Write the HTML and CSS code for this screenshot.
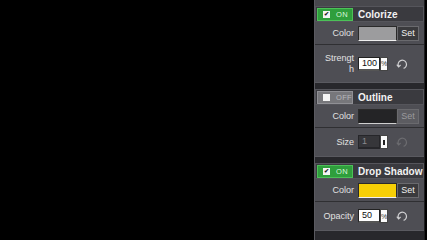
FILE: index.html
```html
<!DOCTYPE html>
<html lang="en">
<head>
  <meta charset="UTF-8">
  <meta name="viewport" content="width=device-width, initial-scale=1.0">
  <title>Effects</title>
  <link rel="stylesheet" href="styles.css">
</head>
<body>
  <div class="stage">
    <div class="panel">

      <div class="effect">
        <div class="effect-head">
          <span class="toggle on"><span class="check">&#10004;</span>ON</span>
          <span class="effect-title">Colorize</span>
        </div>
        <div class="row">
          <span class="label">Color</span>
          <span class="swatch swatch-grey"></span>
          <span class="set">Set</span>
        </div>
        <div class="row row-tall">
          <span class="label"><span class="wrap">Strength</span></span>
          <span class="num">100</span>
          <span class="unit">%</span>
          <svg class="reset" viewBox="0 0 12 12"><path d="M2.6 8.4 A4.2 4.2 0 1 1 7.6 10.4" fill="none" stroke="currentColor" stroke-width="1.2"/><path d="M0.8 6.6 L2.6 9 L4.6 7" fill="none" stroke="currentColor" stroke-width="1.1"/></svg>
        </div>
      </div>

      <div class="effect">
        <div class="effect-head">
          <span class="toggle off"><span class="check"></span>OFF</span>
          <span class="effect-title">Outline</span>
        </div>
        <div class="row">
          <span class="label">Color</span>
          <span class="swatch swatch-dark"></span>
          <span class="set disabled">Set</span>
        </div>
        <div class="row">
          <span class="label">Size</span>
          <span class="num dim">1</span>
          <span class="unit"><span class="bar"></span></span>
          <svg class="reset dim" viewBox="0 0 12 12"><path d="M2.6 8.4 A4.2 4.2 0 1 1 7.6 10.4" fill="none" stroke="currentColor" stroke-width="1.2"/><path d="M0.8 6.6 L2.6 9 L4.6 7" fill="none" stroke="currentColor" stroke-width="1.1"/></svg>
        </div>
      </div>

      <div class="effect">
        <div class="effect-head">
          <span class="toggle on"><span class="check">&#10004;</span>ON</span>
          <span class="effect-title">Drop Shadow</span>
        </div>
        <div class="row">
          <span class="label">Color</span>
          <span class="swatch swatch-yellow"></span>
          <span class="set">Set</span>
        </div>
        <div class="row">
          <span class="label">Opacity</span>
          <span class="num">50</span>
          <span class="unit">%</span>
          <svg class="reset" viewBox="0 0 12 12"><path d="M2.6 8.4 A4.2 4.2 0 1 1 7.6 10.4" fill="none" stroke="currentColor" stroke-width="1.2"/><path d="M0.8 6.6 L2.6 9 L4.6 7" fill="none" stroke="currentColor" stroke-width="1.1"/></svg>
        </div>
      </div>

    </div>
  </div>
</body>
</html>
```

FILE: styles.css
```css
* {
  margin: 0;
  padding: 0;
  box-sizing: border-box;
}

body {
  background: #000;
  font-family: 'Liberation Sans', Arial, sans-serif;
  width: 427px;
  height: 240px;
  overflow: hidden;
}

.stage {
  display: flex;
  justify-content: flex-end;
  padding-right: 2px;
  height: 240px;
}

.panel {
  width: 111px;
  background: #28282c;
  border-left: 1px solid #5a5a60;
  border-right: 1px solid #1c1c1e;
  padding-top: 6px;
  display: flex;
  flex-direction: column;
  gap: 6px;
  box-shadow: inset 0 6px 0 #48484d;
}

.effect {
  display: flex;
  flex-direction: column;
  border-bottom: 1px solid #5a5a60;
}

.effect-head {
  height: 16px;
  background: #3a3a3f;
  border: 1px solid #55555b;
  display: flex;
  align-items: center;
  gap: 5px;
  padding-left: 1px;
}

.toggle {
  width: 36px;
  height: 13px;
  display: flex;
  align-items: center;
  gap: 6px;
  padding-left: 5px;
  font-size: 7.5px;
  letter-spacing: 0.3px;
}

.toggle.on {
  background: #2f9e3c;
  border: 1px solid #4cc158;
  color: #d8f5da;
}

.toggle.off {
  background: #77777b;
  border: 1px solid #909095;
  color: #b8b8bb;
}

.check {
  width: 7px;
  height: 7px;
  background: #f4f4f4;
  color: #1e1e1e;
  font-size: 6px;
  line-height: 7px;
  text-align: center;
  font-weight: bold;
}

.effect-title {
  color: #f2f2f2;
  font-size: 10px;
  font-weight: bold;
}

.row {
  height: 23px;
  background: #4e4e54;
  display: flex;
  align-items: center;
  padding-left: 4px;
  border-bottom: 1px solid #2f2f32;
}

.row + .row {
  height: 28px;
  border-bottom: none;
}

.row.row-tall {
  height: 37px;
}

.label {
  width: 35px;
  margin-right: 4px;
  text-align: right;
  color: #e2e2e2;
  font-size: 9px;
}

.wrap {
  display: inline-block;
  width: 30px;
  word-break: break-all;
  line-height: 11px;
}

.swatch {
  width: 39px;
  height: 15px;
  border: 1px solid #2a2a2a;
}

.swatch-grey {
  background: #9c9c9e;
  border-bottom: 1px solid #f0f0f0;
}

.swatch-dark {
  background: #242426;
  border-bottom: 1px solid #d0d0d0;
}

.swatch-yellow {
  background: #f6cf06;
  border-bottom: 1px solid #f0f0f0;
}

.set {
  width: 22px;
  height: 15px;
  background: #3a3a3d;
  border: 1px solid #6a6a6e;
  color: #f0f0f0;
  font-size: 9px;
  display: flex;
  align-items: center;
  justify-content: center;
}

.set.disabled {
  background: #5c5c61;
  color: #9a9a9d;
}

.num {
  width: 22px;
  height: 14px;
  background: #fff;
  border: 1px solid #222;
  border-bottom: 2px solid #555;
  color: #111;
  font-size: 9px;
  line-height: 11px;
  padding-left: 3px;
}

.num.dim {
  background: #36363a;
  border-color: #26262a;
  color: #8a8a8e;
}

.unit {
  width: 8px;
  height: 14px;
  background: #fafafa;
  border: 1px solid #444;
  color: #333;
  font-size: 7px;
  display: flex;
  align-items: center;
  justify-content: center;
}

.bar {
  width: 2px;
  height: 5px;
  background: #222;
}

.reset {
  width: 12px;
  height: 12px;
  margin-left: 8px;
  color: #d0d0d2;
}

.reset.dim {
  color: #6c6c70;
}
```
